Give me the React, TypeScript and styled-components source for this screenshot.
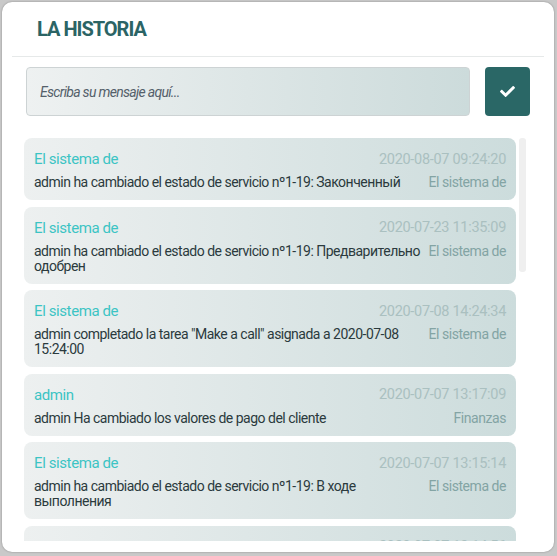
import React from 'react';
import styled, {createGlobalStyle} from 'styled-components';
import {FaCheck} from 'react-icons/fa';

const GlobalStyle = createGlobalStyle`
  html, body {
    margin: 0;
    padding: 0;
    background: #c9c9c9;
  }
  body {
    padding: 2px 3px 4px 2px;
    font-family: Roboto, "Liberation Sans", sans-serif;
  }
`

const Card = styled.div`
  width: 552px;
  height: 550px;
  background: #fff;
  border-radius: 10px;
  box-shadow: 0 0 2px rgba(0, 0, 0, 0.35);
  display: flex;
  flex-direction: column;
  overflow: hidden;
`
const Header = styled.div`
  margin: 0 10px;
  height: 54px;
  display: flex;
  align-items: center;
  padding-left: 25px;
  border-bottom: 1px solid #e6e9e9;
`
const Title = styled.h2`
  margin: 0;
  font-size: 20px;
  font-weight: 700;
  letter-spacing: -1px;
  color: #2b6465;
`
const InputRow = styled.div`
  display: flex;
  gap: 15px;
  padding: 10px 24px 0 24px;
`
const MessageInput = styled.input`
  flex: 1;
  height: 49px;
  box-sizing: border-box;
  border: 1px solid #cdd3d4;
  border-radius: 4px;
  padding: 0 13px;
  font-family: Roboto, "Liberation Sans", sans-serif;
  font-size: 14px;
  font-style: italic;
  letter-spacing: -0.7px;
  background: linear-gradient(to right, #eef1f1, #ccdbdb);
  outline: none;

  &::placeholder {
    color: #54606a;
  }
`
const SendButton = styled.button`
  width: 45px;
  height: 49px;
  border: none;
  border-radius: 4px;
  background: #2a6766;
  color: #fff;
  display: flex;
  align-items: center;
  justify-content: center;
  cursor: pointer;
`
const ListArea = styled.div`
  flex: 1;
  min-height: 0;
  display: flex;
  gap: 3px;
  margin: 22px 28px 11px 22px;
`
const List = styled.div`
  flex: 1;
  overflow: hidden;
  display: flex;
  flex-direction: column;
  gap: 6.5px;
`
const ScrollTrack = styled.div`
  width: 7px;
  flex-shrink: 0;
`
const ScrollThumb = styled.div`
  height: 134px;
  border-radius: 3px;
  background: #efefef;
`
const Item = styled.div`
  flex-shrink: 0;
  padding: 11px 10px 10px 10px;
  border-radius: 8px;
  background: linear-gradient(to right, #edf0f0, #ccdcdc);
`
const ItemTop = styled.div`
  display: flex;
  justify-content: space-between;
  align-items: center;
  height: 20px;
`
const Author = styled.span`
  color: #3cc4c4;
  font-size: 15px;
  letter-spacing: -0.4px;
`
const Date = styled.span`
  color: #aac0c0;
  font-size: 14.5px;
  letter-spacing: -0.3px;
`
const ItemBottom = styled.div`
  display: flex;
  justify-content: space-between;
  margin-top: 6px;
  gap: 8px;
`
const Text = styled.div`
  color: #2b3a3d;
  font-size: 14px;
  line-height: 15px;
  letter-spacing: -0.5px;
`
const Tag = styled.div`
  color: #83a4a4;
  font-size: 14px;
  line-height: 15px;
  letter-spacing: -0.45px;
  white-space: nowrap;
`

const SYS = 'El sistema de';

const history = [
    {author: SYS, date: '2020-08-07 09:24:20', text: 'admin ha cambiado el estado de servicio nº1-19: Законченный', tag: SYS},
    {author: SYS, date: '2020-07-23 11:35:09', text: 'admin ha cambiado el estado de servicio nº1-19: Предварительно одобрен', tag: SYS},
    {author: SYS, date: '2020-07-08 14:24:34', text: 'admin completado la tarea "Make a call" asignada a 2020-07-08 15:24:00', tag: SYS},
    {author: 'admin', date: '2020-07-07 13:17:09', text: 'admin Ha cambiado los valores de pago del cliente', tag: 'Finanzas'},
    {author: SYS, date: '2020-07-07 13:15:14', text: 'admin ha cambiado el estado de servicio nº1-19: В ходе выполнения', tag: SYS},
    {author: SYS, date: '2020-07-07 13:14:56', text: 'admin ha cambiado el estado de servicio nº1-19: Новый', tag: SYS},
    {author: 'admin', date: '2020-07-07 13:10:42', text: 'admin Ha cambiado los valores de pago del cliente', tag: 'Finanzas'},
    {author: SYS, date: '2020-07-06 18:02:11', text: 'admin completado la tarea "Send offer" asignada a 2020-07-06 17:00:00', tag: SYS},
    {author: 'admin', date: '2020-07-06 16:45:30', text: 'admin ha creado el servicio nº1-19', tag: 'Servicios'},
    {author: SYS, date: '2020-07-06 16:40:02', text: 'admin ha creado el cliente', tag: SYS},
];

const App = () => {
    return (
        <>
            <GlobalStyle/>
            <Card>
                <Header>
                    <Title>LA HISTORIA</Title>
                </Header>
                <InputRow>
                    <MessageInput placeholder="Escriba su mensaje aquí..."/>
                    <SendButton><FaCheck size={15}/></SendButton>
                </InputRow>
                <ListArea>
                    <List>
                        {history.map((h, i) => (
                            <Item key={i}>
                                <ItemTop>
                                    <Author>{h.author}</Author>
                                    <Date>{h.date}</Date>
                                </ItemTop>
                                <ItemBottom>
                                    <Text>{h.text}</Text>
                                    <Tag>{h.tag}</Tag>
                                </ItemBottom>
                            </Item>
                        ))}
                    </List>
                    <ScrollTrack><ScrollThumb/></ScrollTrack>
                </ListArea>
            </Card>
        </>
    )
}

export default App;
